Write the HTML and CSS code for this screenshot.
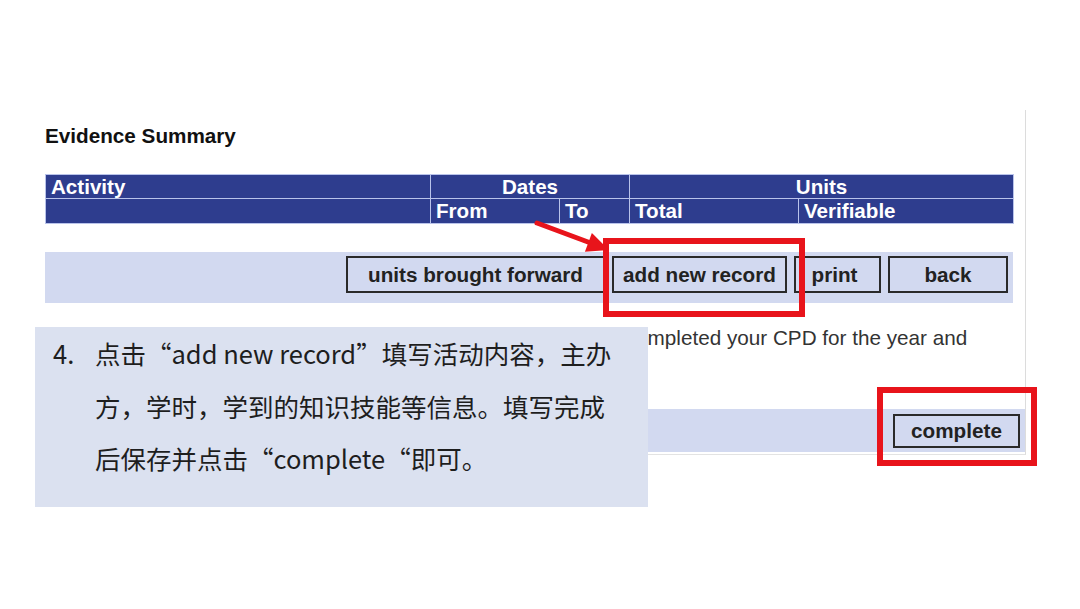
FILE: index.html
```html
<!DOCTYPE html>
<html lang="en">
<head>
<meta charset="utf-8">
<title>Evidence Summary</title>
<link rel="stylesheet" href="styles.css">
</head>
<body>
<div class="page">
  <div class="panel">
    <h2 class="title">Evidence Summary</h2>
    <table class="summary">
      <colgroup>
        <col class="c-act"><col class="c-from"><col class="c-to"><col class="c-total"><col class="c-ver">
      </colgroup>
      <thead>
        <tr class="r1">
          <th class="left">Activity</th>
          <th colspan="2">Dates</th>
          <th colspan="2">Units</th>
        </tr>
        <tr class="r2">
          <th></th>
          <th class="left">From</th>
          <th class="left">To</th>
          <th class="left">Total</th>
          <th class="left">Verifiable</th>
        </tr>
      </thead>
    </table>
    <div class="btnbar">
      <button class="btn b-units">units brought forward</button>
      <button class="btn b-add">add new record</button>
      <button class="btn b-print">print</button>
      <button class="btn b-back">back</button>
    </div>
    <p class="note">Once you are satisfied that you have recorded all activities and completed your CPD for the year and would like to submit, click complete.</p>
    <div class="completebar">
      <button class="btn b-complete">complete</button>
    </div>
  </div>

  <div class="callout" lang="zh-CN">
    <span class="num">4.</span>
    <p class="steptext">点击“add new record”填写活动内容，主办<br>方，学时，学到的知识技能等信息。填写完成<br>后保存并点击“complete“即可。</p>
  </div>

  <div class="hl hl-add"></div>
  <div class="hl hl-complete"></div>
  <svg class="arrow" width="1080" height="609" viewBox="0 0 1080 609" aria-hidden="true">
    <line x1="537" y1="223" x2="592" y2="243.5" stroke="#e8141b" stroke-width="5" stroke-linecap="round"/>
    <polygon points="609,250 584.9,251.7 591.9,232.9" fill="#e8141b"/>
  </svg>
</div>
</body>
</html>
```

FILE: styles.css
```css
html, body {
  margin: 0;
  padding: 0;
  background: #ffffff;
}

.page {
  position: relative;
  width: 1080px;
  height: 609px;
  overflow: hidden;
  font-family: "Liberation Sans", Arial, sans-serif;
  color: #222;
}

.panel {
  margin: 110px 0 0 45px;
  width: 980px;
  padding: 14px 0 2px 0;
  border-right: 1px solid #dcdcdc;
  border-bottom: 1px solid #e3e3e3;
}

.title {
  margin: 0 0 26px 0;
  font-size: 20.7px;
  line-height: 24px;
  font-weight: bold;
  color: #111;
}

.summary {
  width: 968px;
  border-collapse: collapse;
  table-layout: fixed;
}

.c-act { width: 385px; }
.c-from { width: 129px; }
.c-to { width: 70px; }
.c-total { width: 169px; }
.c-ver { width: 215px; }

.summary th {
  background: #2e3d8e;
  color: #fff;
  font-size: 20.6px;
  font-weight: bold;
  line-height: 22px;
  padding: 0 5px;
  border: 1px solid #b9c3ea;
  text-align: center;
  white-space: nowrap;
}

.summary th.left {
  text-align: left;
}

.summary .r1 th { height: 23px; }
.summary .r2 th { height: 24px; }

.btnbar {
  margin-top: 28px;
  width: 968px;
  box-sizing: border-box;
  background: #d2d9f0;
  display: flex;
  justify-content: flex-end;
  gap: 7px;
  padding: 4px 5px 10px 0;
}

.btn {
  height: 37px;
  box-sizing: border-box;
  border: 2px solid #2a2a2a;
  background: transparent;
  font-family: "Liberation Sans", Arial, sans-serif;
  font-size: 20.7px;
  font-weight: bold;
  color: #222;
  padding: 0;
  text-align: center;
}

.b-units { width: 259px; }
.b-add { width: 175px; }
.b-print { width: 87px; padding-right: 6px; }
.b-back { width: 120px; }

.note {
  margin: 23px 0 0 0;
  width: 968px;
  font-size: 20.7px;
  line-height: 24px;
  color: #333;
}

.completebar {
  margin-top: 35px;
  background: #d2d9f0;
  display: flex;
  justify-content: flex-end;
  padding: 5px 5px 4px 0;
}

.b-complete {
  width: 127px;
  height: 34px;
}

.callout {
  position: absolute;
  left: 35px;
  top: 327px;
  width: 613px;
  height: 180px;
  box-sizing: border-box;
  padding: 0 0 0 18px;
  background: #dbe1f0;
  display: flex;
  font-family: "Noto Sans CJK SC", "Noto Sans", sans-serif;
  font-size: 25.5px;
  line-height: 52.5px;
  color: #1e1e1e;
}

.callout .num {
  width: 42px;
  flex: none;
}

.steptext {
  margin: 0;
  white-space: nowrap;
}

.hl {
  position: absolute;
  box-sizing: border-box;
  border: 6px solid #e8141b;
}

.hl-add {
  left: 603px;
  top: 238px;
  width: 202px;
  height: 79px;
}

.hl-complete {
  left: 877px;
  top: 387px;
  width: 160px;
  height: 79px;
}

.arrow {
  position: absolute;
  left: 0;
  top: 0;
  pointer-events: none;
}
```
